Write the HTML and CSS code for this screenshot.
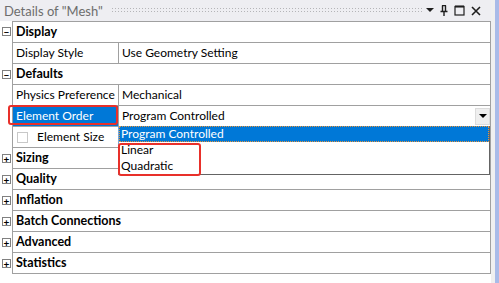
FILE: index.html
```html
<!doctype html>
<html lang="en">
    <head>
        <meta charset="UTF-8" />
        <title>Details of "Mesh"</title>
        <link rel="stylesheet" href="styles.css">
    </head>
    <body>
        <div class="window">
            <div class="panel">
                <!-- Barra del titolo -->
                <div class="titlebar">
                    <span class="title">Details of "Mesh"</span>
                    <span class="grip"></span>
                    <span class="tb-icons">
                        <svg width="8" height="5" viewBox="0 0 8 5"><path d="M0 0H8L4 4Z" fill="#1e1e1e"/></svg>
                        <svg width="8" height="11" viewBox="0 0 8 11"><path d="M2 0.5H6M2.5 0.5V6M5.5 0.5V6M0.5 6.5H7.5M4 6.5V11" stroke="#1e1e1e" stroke-width="1.4" fill="none"/></svg>
                        <svg width="11" height="11" viewBox="0 0 11 11"><rect x="1" y="1.5" width="9" height="8.5" stroke="#1e1e1e" stroke-width="1.2" fill="none"/><path d="M1 1.5H10" stroke="#1e1e1e" stroke-width="2"/></svg>
                        <svg width="10" height="10" viewBox="0 0 10 10"><path d="M1 1L9 9M9 1L1 9" stroke="#1e1e1e" stroke-width="1.6"/></svg>
                    </span>
                </div>

                <div class="grid">
                    <div class="row group first">
                        <span class="toggle">&minus;</span>
                        <div class="cells"><span class="head">Display</span></div>
                    </div>
                    <div class="row">
                        <span class="toggle empty"></span>
                        <div class="cells"><span class="name">Display Style</span><span class="value">Use Geometry Setting</span></div>
                    </div>
                    <div class="row group">
                        <span class="toggle">&minus;</span>
                        <div class="cells"><span class="head">Defaults</span></div>
                    </div>
                    <div class="row">
                        <span class="toggle empty"></span>
                        <div class="cells"><span class="name">Physics Preference</span><span class="value">Mechanical</span></div>
                    </div>
                    <div class="row">
                        <span class="toggle empty"></span>
                        <div class="cells">
                            <span class="name selected">Element Order</span>
                            <span class="value combo">Program Controlled<span class="combo-btn"><svg width="8" height="5" viewBox="0 0 8 5"><path d="M0 0H8L4 4Z" fill="#000"/></svg></span></span>
                        </div>
                    </div>
                    <div class="row">
                        <span class="toggle empty"></span>
                        <div class="cells"><span class="name sub"><span class="check"></span>Element Size</span><span class="value"></span></div>
                    </div>
                    <div class="row group">
                        <span class="toggle">+</span>
                        <div class="cells"><span class="head">Sizing</span></div>
                    </div>
                    <div class="row group">
                        <span class="toggle">+</span>
                        <div class="cells"><span class="head">Quality</span></div>
                    </div>
                    <div class="row group">
                        <span class="toggle">+</span>
                        <div class="cells"><span class="head">Inflation</span></div>
                    </div>
                    <div class="row group">
                        <span class="toggle">+</span>
                        <div class="cells"><span class="head">Batch Connections</span></div>
                    </div>
                    <div class="row group">
                        <span class="toggle">+</span>
                        <div class="cells"><span class="head">Advanced</span></div>
                    </div>
                    <div class="row group">
                        <span class="toggle">+</span>
                        <div class="cells"><span class="head">Statistics</span></div>
                    </div>

                    <!-- Lista a tendina aperta -->
                    <div class="dropdown">
                        <div class="opt active">Program Controlled</div>
                        <div class="opt">Linear</div>
                        <div class="opt">Quadratic</div>
                    </div>

                    <!-- Evidenziazioni rosse -->
                    <div class="mark mark-order"></div>
                    <div class="mark mark-options"></div>
                </div>
            </div>
            <div class="edge"></div>
        </div>
    </body>
</html>
```

FILE: styles.css
```css
body {
    margin: 0;
    font-family: Lato, "Noto Sans", sans-serif;
    font-size: 12px;
    color: #000;
    background-color: #fff;
}
.window {
    display: flex;
    width: 499px;
    height: 283px;
}
.panel {
    width: 491px;
    background-color: #fff;
}
.edge {
    width: 8px;
    border-left: 4px solid #f0f0f0;
    box-sizing: border-box;
    background-color: #a9bbe8;
}
/* Barra del titolo */
.titlebar {
    height: 21px;
    display: flex;
    align-items: center;
    background-color: #eeeef2;
    padding-left: 4px;
}
.title {
    color: #6d6d6d;
    font-size: 13px;
}
.grip {
    flex: 1;
    height: 7px;
    margin: 0 4px 0 8px;
    background-image: radial-gradient(circle, #b5b5b8 0.8px, transparent 0.9px);
    background-size: 3px 3px;
}
.tb-icons {
    display: flex;
    align-items: center;
    gap: 6px;
    padding-right: 10px;
}
/* Griglia proprieta */
.grid {
    position: relative;
}
.row {
    display: flex;
    height: 21px;
    white-space: nowrap;
}
.toggle {
    width: 12px;
    display: flex;
    align-items: center;
    justify-content: center;
    font-size: 10px;
    line-height: 1;
}
.group .toggle {
    width: 9px;
    height: 9px;
    margin: 6px 1px 0 2px;
    border: 1px solid #808080;
    box-sizing: border-box;
    font-weight: bold;
}
.cells {
    flex: 1;
    display: flex;
    border-left: 1px solid #a0a0a0;
    border-right: 1px solid #a0a0a0;
    border-bottom: 1px solid #a0a0a0;
    box-sizing: border-box;
}
.first {
    height: 22px;
}
.first .cells {
    border-top: 1px solid #a0a0a0;
}
.head {
    font-weight: bold;
    font-size: 12.5px;
    padding-left: 3px;
    line-height: 20px;
}
.name {
    width: 106px;
    padding-left: 3px;
    box-sizing: border-box;
    border-right: 1px solid #a0a0a0;
    line-height: 20px;
    display: flex;
    align-items: center;
}
.name.selected {
    background-color: #0078d7;
    color: #fff;
}
.name.sub {
    padding-left: 4px;
}
.check {
    width: 11px;
    height: 11px;
    border: 1px solid #c8c8c8;
    box-sizing: border-box;
    margin-right: 9px;
}
.value {
    flex: 1;
    padding-left: 3px;
    line-height: 20px;
}
.combo {
    display: flex;
    justify-content: space-between;
    align-items: center;
}
.combo-btn {
    width: 15px;
    height: 17px;
    display: flex;
    align-items: center;
    justify-content: center;
    background-color: #efefef;
    border: 1px solid #dcdcdc;
    box-sizing: border-box;
}
/* Lista a tendina */
.dropdown {
    position: absolute;
    left: 118px;
    top: 105px;
    width: 372px;
    height: 49px;
    background-color: #fff;
    border-left: 1px solid #7aa7d6;
    border-right: 1px solid #646464;
    border-bottom: 1px solid #646464;
    box-sizing: border-box;
}
.opt {
    height: 16px;
    line-height: 16px;
    padding-left: 2px;
}
.opt.active {
    background-color: #0078d7;
    color: #fff;
    outline: 1px dotted #e8953c;
    outline-offset: -1px;
}
.mark {
    position: absolute;
    border: 2.5px solid #e8302a;
    border-radius: 3px;
    box-sizing: border-box;
}
.mark-order {
    left: 8px;
    top: 84px;
    width: 110px;
    height: 20px;
}
.mark-options {
    left: 118px;
    top: 122px;
    width: 83px;
    height: 33px;
}
```
